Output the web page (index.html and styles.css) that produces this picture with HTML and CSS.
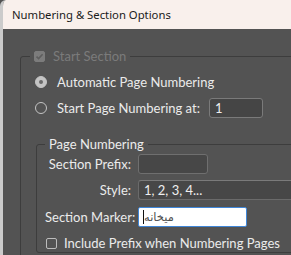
FILE: index.html
```html
<!DOCTYPE html>
<html>
<head>
<meta charset="utf-8">
<link rel="stylesheet" href="styles.css">
</head>
<body>
<div class="window">
  <div class="titlebar">Numbering &amp; Section Options</div>
  <div class="content">
    <fieldset class="group outer">
      <legend class="legend-cb"><span class="cb cb-disabled"><svg viewBox="0 0 11 11" width="11" height="11"><path d="M2.5 5.6 L4.6 7.6 L8.6 3.2" fill="none" stroke="#5e5e5e" stroke-width="1.6"/></svg></span><span class="disabled-text">Start Section</span></legend>
      <div class="row radio-row"><span class="radio radio-on"></span><span>Automatic Page Numbering</span></div>
      <div class="row radio-row"><span class="radio"></span><span>Start Page Numbering at:</span><span class="field field-num">1</span></div>
      <fieldset class="group inner">
        <legend class="legend-text">Page Numbering</legend>
        <div class="form">
          <span class="label">Section Prefix:</span><span class="field field-prefix"></span>
          <span class="label">Style:</span><span class="field field-style">1, 2, 3, 4...</span>
          <span class="label">Section Marker:</span><span class="field field-marker"><span class="caret"></span><span class="arabic" dir="rtl">میخانه</span></span>
        </div>
        <div class="row check-row"><span class="cb"></span><span>Include Prefix when Numbering Pages</span></div>
      </fieldset>
    </fieldset>
  </div>
</div>
</body>
</html>
```

FILE: styles.css
```css
html, body {
  margin: 0;
  padding: 0;
  background: #535353;
}
body {
  width: 291px;
  height: 255px;
  overflow: hidden;
  font-family: "Lato", "Noto Sans", sans-serif;
  white-space: nowrap;
}
.window {
  height: 255px;
  border-left: 3px solid #cbcbcb;
  border-top-left-radius: 6px;
  overflow: hidden;
  background: #535353;
}
.titlebar {
  height: 29px;
  background: #f9f0ec;
  color: #1b1b1b;
  font-family: "Noto Sans", sans-serif;
  font-size: 11.3px;
  line-height: 29px;
  padding-left: 9px;
  box-sizing: border-box;
}
.content {
  padding: 19px 0 0 17px;
}
.group {
  margin: 0;
  border: 1px solid #3d3d3d;
  border-radius: 3px;
  min-width: 0;
}
.outer {
  width: 400px;
  padding: 0 0 20px 14px;
}
.legend-cb {
  display: flex;
  align-items: center;
  gap: 8px;
  height: 16px;
  padding: 0 4px;
  margin-left: -5px;
  font-size: 13px;
}
.disabled-text {
  color: #7b7b7b;
}
.cb {
  width: 11px;
  height: 11px;
  box-sizing: border-box;
  border: 1px solid #bcbcbc;
  border-radius: 2px;
  flex: none;
  display: block;
}
.cb-disabled {
  background: #7c7c7c;
  border-color: #7c7c7c;
}
.cb svg {
  display: block;
  margin: -1px;
}
.row {
  display: flex;
  align-items: center;
  color: #ebebeb;
  font-size: 13px;
}
.radio-row {
  height: 26px;
  gap: 10px;
}
.radio-row:first-of-type {
  margin-top: 5px;
}
.radio {
  width: 12px;
  height: 12px;
  box-sizing: border-box;
  border: 1px solid #c4c4c4;
  border-radius: 50%;
  flex: none;
  position: relative;
}
.radio-on {
  background: #c4c4c4;
}
.radio-on::after {
  content: "";
  position: absolute;
  left: 3px;
  top: 3px;
  width: 4px;
  height: 4px;
  border-radius: 50%;
  background: #6a6a6a;
}
.field {
  display: flex;
  align-items: center;
  box-sizing: border-box;
  height: 20px;
  border: 1px solid #6f6f6f;
  border-radius: 3px;
  background: #474747;
  color: #efefef;
  font-size: 13px;
  padding-left: 5px;
}
.field-num {
  width: 54px;
  margin-left: -1px;
  border-color: #7a7a7a;
  background: #454545;
}
.inner {
  margin: 15px 0 0 1px;
  padding: 0 0 0 8px;
}
.legend-text {
  padding: 0 4px;
  height: 16px;
  line-height: 16px;
  color: #ececec;
  font-size: 13px;
}
.form {
  display: grid;
  grid-template-columns: 86px auto;
  column-gap: 7px;
  row-gap: 6px;
  margin-top: 2px;
  align-items: center;
}
.label {
  text-align: right;
  color: #ebebeb;
  font-size: 13px;
}
.field-prefix {
  width: 70px;
}
.field-style {
  width: 200px;
  border-color: #6a6a6a;
  border-top-color: #7a7a7a;
  border-right: none;
  border-radius: 3px 0 0 3px;
}
.field-marker {
  width: 109px;
  height: 20px;
  background: #ffffff;
  border: 1px solid #3f86d8;
  border-radius: 2px;
  padding-left: 4px;
  margin-top: 1px;
}
.caret {
  width: 1px;
  height: 14px;
  background: #111;
  flex: none;
}
.arabic {
  font-family: "DejaVu Sans", sans-serif;
  font-size: 11.5px;
  color: #505050;
}
.check-row {
  margin-top: 7px;
  margin-left: 1px;
  height: 18px;
  gap: 7px;
}
```
